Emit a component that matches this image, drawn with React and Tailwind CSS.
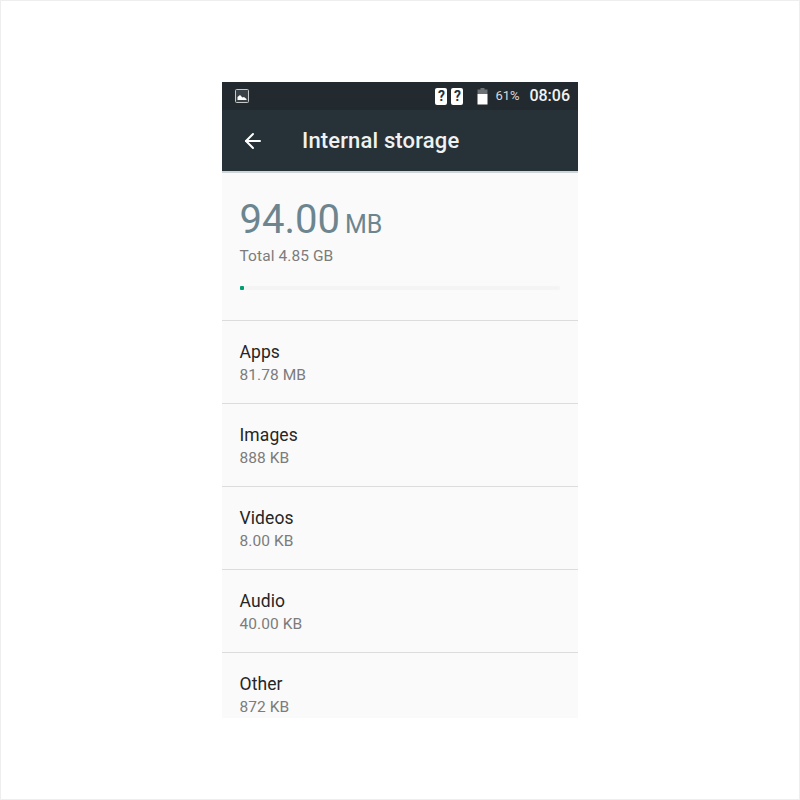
import React from 'react';
import { ArrowLeft } from 'lucide-react';

const items = [
  { name: 'Apps', size: '81.78 MB' },
  { name: 'Images', size: '888 KB' },
  { name: 'Videos', size: '8.00 KB' },
  { name: 'Audio', size: '40.00 KB' },
  { name: 'Other', size: '872 KB' },
];

const UnknownSim = () => (
  <div className="w-[12px] h-[17px] bg-white rounded-[2px] flex items-center justify-center text-[#263238] text-[14px] font-bold leading-none">?</div>
);

export default function App() {
  return (
    <div className="w-[800px] h-[800px] bg-white border border-[#eeeeee] pt-[81px] pl-[221px] font-['Roboto',sans-serif]">
      <div className="w-[356px] h-[636px] bg-[#fafafa] overflow-hidden">
        {/* status bar */}
        <div className="h-[28px] bg-[#222a2f] flex items-center pl-[13px] pr-[8px]">
          <svg width="14" height="14" viewBox="0 0 14 14">
            <rect x="0.5" y="0.5" width="13" height="13" rx="1" fill="#3a4247" stroke="#c4c6c8" />
            <path d="M2.5 11 L2.5 8 L5 6 L7.5 8.5 L9 8 L11.5 10 L11.5 11 Z" fill="#ffffff" />
          </svg>
          <div className="ml-auto flex items-center">
            <div className="flex gap-[4px]">
              <UnknownSim />
              <UnknownSim />
            </div>
            <svg width="11" height="17" viewBox="0 0 11 17" className="ml-[14px]">
              <path d="M3.5 0 H7.5 V1.5 H10.5 V6 H0.5 V1.5 H3.5 Z" fill="#6b7174" />
              <rect x="0.5" y="6" width="10" height="10.5" fill="#ffffff" />
            </svg>
            <span className="ml-[7px] text-[13px] text-[#d6d8d9] w-[25px]">61%</span>
            <span className="ml-[9px] text-[16px] font-medium text-[#f2f3f3]">08:06</span>
          </div>
        </div>
        {/* toolbar */}
        <div className="h-[63px] bg-[#263238] border-b-2 border-[#cfd4d6] flex items-center pl-[19px]">
          <ArrowLeft size={24} strokeWidth={2} className="text-white" />
          <span className="ml-[37px] text-[22px] tracking-[0.15px] font-medium text-[#f0f1f1]">Internal storage</span>
        </div>
        {/* summary */}
        <div className="h-[148px] border-b border-[#dcdcdc] pl-[17.5px] pr-[18px] pt-[23px]">
          <div className="flex items-baseline text-[#6c858f]">
            <span className="text-[40px] leading-[48px]">94.00</span>
            <span className="ml-[5px] text-[25px]">MB</span>
          </div>
          <div className="mt-[2px] text-[15.5px] tracking-[0.08px] leading-[20px] text-[#7c7c7c]">Total 4.85 GB</div>
          <div className="mt-[20px] h-[4px] w-[320px] bg-[#f4f4f4] rounded-full">
            <div className="w-[4px] h-[4px] bg-[#009e72] rounded-[1px]" />
          </div>
        </div>
        {/* categories */}
        {items.map((it) => (
          <div key={it.name} className="h-[83px] border-b border-[#dcdcdc] pl-[17.5px] pr-[18px] pt-[20px]">
            <div className="text-[17.5px] tracking-[0.1px] leading-[22px] text-[#262626]">{it.name}</div>
            <div className="text-[15.5px] tracking-[0.08px] leading-[20px] mt-[2px] text-[#7c7c7c]">{it.size}</div>
          </div>
        ))}
      </div>
    </div>
  );
}
